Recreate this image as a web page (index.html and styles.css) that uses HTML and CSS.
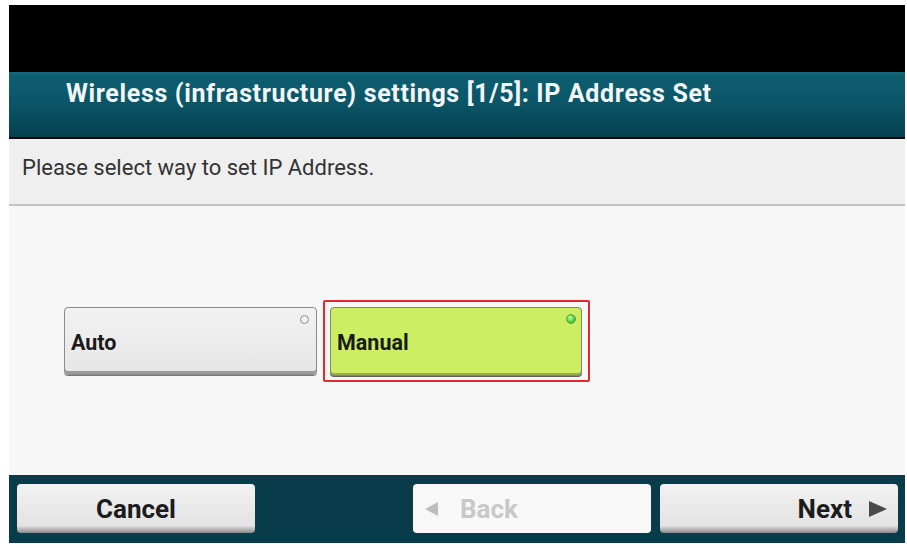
FILE: index.html
```html
<!DOCTYPE html>
<html>
<head>
<meta charset="utf-8">
<link rel="stylesheet" href="styles.css">
</head>
<body>
<div class="screen">
  <div class="topbar"></div>
  <div class="header"><span class="title">Wireless (infrastructure) settings [1/5]: IP Address Set</span></div>
  <div class="prompt">Please select way to set IP Address.</div>
  <div class="content">
    <div class="options">
      <button class="opt opt-auto"><span>Auto</span><i class="dot"></i></button>
      <div class="selected-frame">
        <button class="opt opt-manual"><span>Manual</span><i class="dot dot-on"></i></button>
      </div>
    </div>
  </div>
  <div class="footer">
    <button class="fbtn cancel">Cancel</button>
    <div class="spacer"></div>
    <button class="fbtn back"><span class="tri tri-left"></span><span>Back</span></button>
    <button class="fbtn next"><span>Next</span><span class="tri tri-right"></span></button>
  </div>
</div>
</body>
</html>
```
FILE: styles.css
```css
html, body {
  margin: 0;
  padding: 0;
  background: #ffffff;
}
body {
  padding: 5px 2px 0 9px;
  font-family: Roboto, "Liberation Sans", sans-serif;
}
.screen {
  width: 896px;
  display: flex;
  flex-direction: column;
}
.topbar {
  height: 67px;
  background: #000;
}
.header {
  height: 65px;
  border-bottom: 2px solid #050a0c;
  background: linear-gradient(#156a7c 0px, #0e5e70 4px, #0a5668 30px, #06404f 100%);
  display: flex;
  align-items: flex-start;
  padding-left: 57px;
  padding-top: 0;
  box-sizing: border-box;
  height: 67px;
}
.title {
  color: #f2f6f7;
  font-weight: 700;
  font-size: 25px;
  line-height: 30px;
  letter-spacing: 0.65px;
  white-space: nowrap;
  margin-top: 7px;
}
.prompt {
  height: 67px;
  box-sizing: border-box;
  background: #efefef;
  border-bottom: 2px solid #c2c2c2;
  display: flex;
  align-items: center;
  padding-left: 13px;
  padding-bottom: 8px;
  color: #333;
  font-size: 22px;
}
.content {
  height: 269px;
  background: #f7f7f7;
  padding-top: 94px;
  box-sizing: border-box;
  padding-left: 55px;
}
.options {
  display: flex;
  align-items: flex-start;
  gap: 6px;
}
.opt {
  position: relative;
  width: 253px;
  height: 68px;
  border-radius: 4px;
  border: 1px solid #8c8c8c;
  font-family: Roboto, "Liberation Sans", sans-serif;
  font-weight: 700;
  font-size: 21.5px;
  color: #1a1a1a;
  text-align: left;
  padding: 2px 0 0 6px;
  display: flex;
  align-items: center;
  box-sizing: border-box;
}
.opt-auto {
  margin-top: 7px;
  background: linear-gradient(#f2f2f2, #e6e6e6);
  box-shadow: inset 0 -3px 0 #9a9a9a, 0 1px 0 #7a7a7a;
}
.selected-frame {
  border: 2px solid #e32a2a;
  padding: 5px 6px 4px 5px;
  border-radius: 2px;
  background: #f7f7f7;
}
.opt-manual {
  width: 252px;
  height: 69px;
  background: #ccee62;
  border-color: #7f8a60;
  box-shadow: inset 0 -2px 0 #9aab5c, 0 1px 0 #606060;
}
.dot {
  position: absolute;
  top: 7px;
  right: 7px;
  width: 9px;
  height: 9px;
  border-radius: 50%;
  border: 1.5px solid #8e8e8e;
  background: #f0f0f0;
  box-sizing: border-box;
}
.dot-on {
  width: 10px;
  height: 10px;
  top: 6px;
  right: 5px;
  border: 1px solid #6a9a40;
  background: radial-gradient(circle at 40% 35%, #c8ffb0 0, #4cd43c 55%, #2a9c20 100%);
}
.footer {
  height: 68px;
  background: #083c4b;
  display: flex;
  align-items: flex-start;
  padding: 9px 7px 0 8px;
  box-sizing: border-box;
  gap: 9px;
}
.spacer { flex: 1; }
.fbtn {
  width: 238px;
  height: 49px;
  border: none;
  border-radius: 4px;
  font-family: Roboto, "Liberation Sans", sans-serif;
  font-weight: 700;
  font-size: 26px;
  color: #1c1c1c;
  display: flex;
  align-items: center;
  box-sizing: border-box;
  padding: 0;
}
.cancel {
  justify-content: center;
  background: linear-gradient(#f2f2f2, #e3e3e3 85%, #8a8a8a 100%);
}
.back {
  background: #f8f8f8;
  color: #c8c8c8;
  padding-left: 12px;
  gap: 22px;
}
.next {
  background: linear-gradient(#f2f2f2, #e3e3e3 85%, #8a8a8a 100%);
  justify-content: flex-end;
  padding-right: 11px;
  gap: 17px;
}
.tri {
  width: 0;
  height: 0;
  border-top: 8px solid transparent;
  border-bottom: 8px solid transparent;
}
.tri-left {
  border-right: 13px solid #bdbdbd;
  border-top-width: 7px;
  border-bottom-width: 7px;
}
.tri-right {
  border-left: 18px solid #4a4a4a;
}
```
